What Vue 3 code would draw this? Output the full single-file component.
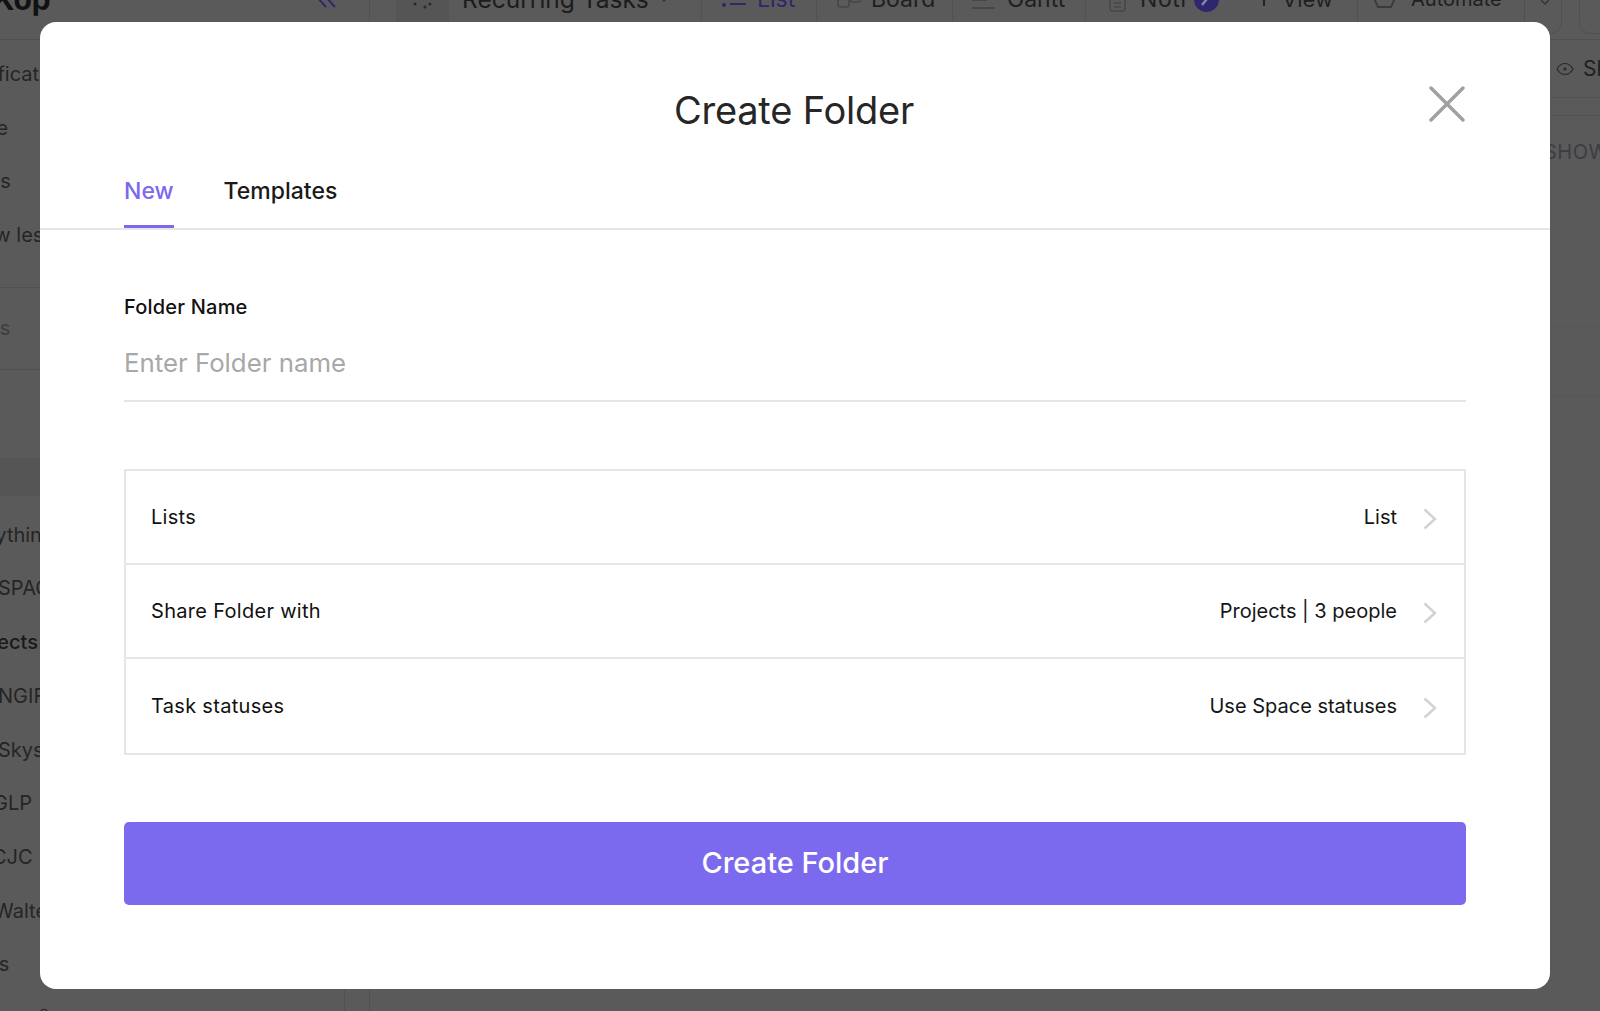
<script setup>
const upper = [
  { text: 'Notifications', shift: -41 },
  { text: 'Home', shift: -48 },
  { text: 'Goals', shift: -43 },
  { text: 'Show less', shift: -42 }
]
const lower = [
  { text: 'Everything', shift: -47, tone: 'dark' },
  { text: 'SPACES', shift: -2, tone: 'dark' },
  { text: 'Projects', shift: -40, tone: 'bold' },
  { text: 'ENGIFY', shift: -14, tone: 'dark' },
  { text: 'Skyscraper', shift: -2, tone: 'dark' },
  { text: 'GLP', shift: -7, tone: 'dark' },
  { text: 'CJC', shift: -8, tone: 'dark' },
  { text: 'Walter', shift: -6, tone: 'dark' },
  { text: 'Docs', shift: -39, tone: 'dark' }
]
const rows = [
  { label: 'Lists', value: 'List' },
  { label: 'Share Folder with', value: 'Projects | 3 people' },
  { label: 'Task statuses', value: 'Use Space statuses' }
]
</script>

<template>
  <div class="page">
    <header class="topbar">
      <div class="topbar-row">
        <span class="logo">Kop</span>
        <svg class="collapse" width="22" height="12" viewBox="0 0 22 12"><path d="M2 1l9 10M11 1l9 10" /></svg>
        <i class="vline first"></i>
        <span class="space-icon">
          <svg width="53" height="12" viewBox="0 0 53 12"><circle cx="19" cy="6" r="1.500" /><circle cx="29" cy="9" r="1.500" /><circle cx="34" cy="6" r="1.500" /></svg>
        </span>
        <span class="crumb">Recurring Tasks
          <svg width="10" height="6" viewBox="0 0 10 6"><path d="M1 1l4 4 4-4" /></svg>
        </span>
        <i class="vline"></i>
        <span class="view active v-list">
          <svg width="24" height="20" viewBox="0 0 24 20"><circle cx="2" cy="16" r="2" fill="#2f2670" /><circle cx="2" cy="8" r="2" fill="#2f2670" /><path d="M8 15h16M8 8h16" stroke="#2f2670" stroke-width="2" /></svg>
          List
        </span>
        <i class="vline"></i>
        <span class="view v-board">
          <svg width="26" height="20" viewBox="0 0 26 20" fill="none" stroke="#464646" stroke-width="1.600"><rect x="1" y="0" width="11" height="18" rx="3" /><rect x="13" y="0" width="11" height="13" rx="3" /></svg>
          Board
        </span>
        <i class="vline"></i>
        <span class="view v-gantt">
          <svg width="26" height="20" viewBox="0 0 26 20" stroke="#474747" stroke-width="2"><path d="M1 11h15M1 19h23" /></svg>
          Gantt
        </span>
        <i class="vline"></i>
        <span class="view v-not">
          <svg width="18" height="20" viewBox="0 0 18 20" fill="none" stroke="#474747" stroke-width="1.600"><rect x="1" y="0" width="15" height="22" rx="3" /><path d="M5 14h7M5 18h7" /></svg>
          Noti
        </span>
        <span class="badge">
          <svg width="25" height="25" viewBox="0 0 25 25"><path d="M8 18l9-11" /></svg>
        </span>
        <span class="view v-plus">
          <svg width="14" height="14" viewBox="0 0 14 14" stroke="#222" stroke-width="2"><path d="M7 0v14M0 7h14" /></svg>
          View
        </span>
        <span class="pill">
          <svg class="hex" width="27" height="28" viewBox="0 0 27 28" fill="none" stroke="#3a3a3a" stroke-width="1.800"><path d="M7 1h13l6 13-6 13H7L1 14z" /><circle cx="13.500" cy="14" r="5" /></svg>
          <span class="pill-label">Automate</span>
          <i class="pill-div"></i>
          <svg class="pill-caret" width="10" height="6" viewBox="0 0 10 6" fill="none" stroke="#333" stroke-width="1.400"><path d="M1 1l4 4 4-4" /></svg>
        </span>
        <span class="pill stub"></span>
      </div>
    </header>

    <div class="under">
      <aside class="side">
        <div class="side-group top">
          <div v-for="r in upper" :key="r.text" class="side-row" :style="{ marginLeft: r.shift + 'px' }">{{ r.text }}</div>
        </div>
        <div class="side-section"><span class="muted">Docs</span></div>
        <div class="side-band"></div>
        <div class="side-group">
          <div v-for="r in lower" :key="r.text" class="side-row" :class="r.tone" :style="{ marginLeft: r.shift + 'px' }">{{ r.text }}</div>
        </div>
        <svg class="side-tail" width="10" height="10" viewBox="0 0 10 10" fill="none" stroke="#2a2a2a" stroke-width="1.400"><circle cx="5" cy="5" r="3.600" /></svg>
      </aside>
      <div class="gutter"></div>
      <main class="main">
        <div class="main-tools">
          <svg class="eye" width="18" height="18" viewBox="0 0 18 18" fill="none" stroke="#2a2a2a" stroke-width="1.200"><path d="M1 9c2-3.600 4.800-5.500 8-5.500S15 5.400 17 9c-2 3.600-4.800 5.500-8 5.500S3 12.600 1 9z" /><circle cx="9" cy="9" r="1.600" fill="#2a2a2a" stroke="none" /></svg>
          <span>Show</span>
        </div>
        <div class="main-sub"></div>
        <div class="main-show">SHOW</div>
        <div class="main-row"></div>
      </main>
    </div>

    <section class="modal">
      <h1 class="title">Create Folder</h1>
      <svg class="close" width="36" height="36" viewBox="0 0 36 36" aria-label="Close">
        <path d="M2 2l32 32M34 2L2 34" />
      </svg>

      <nav class="tabs">
        <span class="tab on">New</span>
        <span class="tab">Templates</span>
      </nav>

      <div class="body">
        <label class="field-label">Folder Name</label>
        <div class="field">Enter Folder name</div>

        <div class="options">
          <div v-for="row in rows" :key="row.label" class="option">
            <span class="option-label">{{ row.label }}</span>
            <span class="option-value">{{ row.value }}</span>
            <svg class="chev" width="14" height="22" viewBox="0 0 14 22"><path d="M1.500 1.500L12 11 1.500 20.500" /></svg>
          </div>
        </div>

        <button class="submit">Create Folder</button>
      </div>
    </section>
  </div>
</template>

<style>
html, body { margin: 0; background: #5a5a5a; }
</style>

<style scoped>
.page {
  position: relative;
  width: 1600px;
  height: 1011px;
  overflow: hidden;
  background: #5a5a5a;
  font-family: Inter, "Liberation Sans", sans-serif;
  color: #1f1f1f;
}

/* dimmed app behind the dialog */
.topbar {
  height: 39px;
  border-bottom: 1px solid #505050;
  overflow: hidden;
}
.topbar-row {
  display: flex;
  align-items: center;
  width: max-content;
  height: 26px;
  margin-top: -14px;
  font-size: 23px;
  white-space: nowrap;
}
.topbar-row > * { flex: none; }
.logo { font-size: 30px; font-weight: 700; color: #111; width: 316px; margin-left: -7px; margin-right: 6px; }
.collapse { margin-top: 6px; }
.collapse path { fill: none; stroke: #2f2670; stroke-width: 2; }
.vline { width: 1px; height: 80px; background: #515151; }
.first { margin-left: 32px; }
.space-icon {
  display: flex;
  align-items: center;
  width: 53px;
  height: 86px;
  background: #555;
  margin-left: 26px;
}
.space-icon svg { margin-top: 10px; }
.space-icon circle { fill: #2b2b2b; }
.crumb {
  display: flex;
  align-items: center;
  gap: 10px;
  font-size: 24.500px;
  color: #1c1c1c;
  margin-left: 13px;
  width: 239px;
}
.crumb path { fill: none; stroke: #333; stroke-width: 1.400; }
.view { display: flex; align-items: center; color: #202020; }
.view svg { overflow: visible; flex: none; }
.active { color: #2f2670; }
.v-list { margin-left: 20px; width: 94px; gap: 11px; }
.v-board { margin-left: 20px; width: 115px; gap: 8px; }
.v-gantt { margin-left: 18px; width: 114px; gap: 10px; }
.v-not { margin-left: 23px; width: 85px; gap: 13px; letter-spacing: 0.600px; }
.badge { width: 25px; height: 25px; border-radius: 50%; background: #2f2670; }
.badge svg { display: block; }
.badge path { fill: none; stroke: #8b86b0; stroke-width: 2.400; }
.v-plus { margin-left: 38px; width: 100px; gap: 11px; font-size: 22px; }
.pill {
  display: flex;
  align-items: center;
  gap: 13px;
  width: 205px;
  height: 70px;
  padding-left: 13px;
  box-sizing: border-box;
  border: 1px solid #505050;
  border-radius: 12px;
  color: #202020;
}
.hex { margin-top: -10px; flex: none; }
.pill-label { font-size: 20px; }
.pill-div { width: 1px; height: 70px; background: #505050; margin-left: auto; }
.pill-caret { margin: 6px 11px 0 2px; flex: none; }
.stub { margin-left: 17px; width: 60px; padding: 0; }

.under { display: flex; height: 971px; }
.side {
  width: 345px;
  flex: none;
  border-right: 1px solid #515151;
  box-sizing: border-box;
  padding-top: 8px;
  overflow: hidden;
  font-size: 20px;
}
.side-row { height: 53.700px; line-height: 53.700px; color: #252525; white-space: nowrap; }
.bold { font-weight: 500; color: #1a1a1a; }
.side-section {
  margin-top: 24px;
  height: 81px;
  line-height: 81px;
  border-top: 1px solid #515151;
  border-bottom: 1px solid #515151;
}
.muted { margin-left: -38px; color: #3e3e3e; }
.side-band { height: 38px; margin: 88px 0 13px; background: #555; }
.side-tail { display: block; margin: 16px 0 0 39px; }
.gutter { width: 24px; flex: none; border-right: 1px solid #515151; }
.main { flex: 1; min-width: 0; overflow: hidden; white-space: nowrap; }
.main-tools {
  display: flex;
  align-items: center;
  gap: 9px;
  width: max-content;
  height: 57px;
  padding-left: 1186px;
  padding-right: 100px;
  border-bottom: 1px solid #525252;
  font-size: 21px;
  color: #202020;
}
.eye { flex: none; }
.main-sub { height: 17px; border-bottom: 1px solid #525252; }
.main-show { margin: 24px 0 0 1174px; font-size: 20px; color: #3c3d42; letter-spacing: 0.500px; }
.main-row { height: 68px; margin-top: 162px; border-top: 1px solid #565656; border-bottom: 1px solid #565656; }

/* dialog */
.modal {
  position: absolute;
  left: 40px;
  top: 22px;
  width: 1510px;
  height: 967px;
  box-sizing: border-box;
  background: #fff;
  border-radius: 16px;
  display: flex;
  flex-direction: column;
}
.title {
  margin: 65px 2px 0 0;
  font-size: 38px;
  line-height: 46px;
  font-weight: 400;
  letter-spacing: -0.200px;
  text-align: center;
  color: #262626;
}
.close {
  position: absolute;
  left: 1389px;
  top: 64px;
}
.close path { fill: none; stroke: #a0a0a0; stroke-width: 3.400; stroke-linecap: round; }

.tabs {
  display: flex;
  gap: 50px;
  height: 95px;
  padding: 0 84px;
  border-bottom: 2px solid #e6e6e6;
  align-items: flex-end;
}
.tab {
  font-size: 23px;
  font-weight: 500;
  line-height: 28px;
  padding-bottom: 20px;
  color: #1a1a1a;
  border-bottom: 3px solid transparent;
}
.on { color: #7b68ee; border-bottom-color: #7b68ee; }

.body {
  padding: 65px 84px 0;
  display: flex;
  flex-direction: column;
}
.field-label {
  font-size: 20px;
  line-height: 24px;
  font-weight: 500;
  letter-spacing: 0.200px;
  color: #111;
}
.field {
  margin-top: 28px;
  height: 53px;
  font-size: 25.800px;
  line-height: 32px;
  color: #a8a8a8;
  border-bottom: 2px solid #e6e6e6;
}
.options {
  margin-top: 67px;
  border: 2px solid #e6e6e6;
  box-sizing: border-box;
}
.option {
  display: flex;
  align-items: center;
  height: 92px;
  padding: 0 27px 0 25px;
  font-size: 20px;
  color: #161616;
  border-bottom: 2px solid #e6e6e6;
}
.option:last-child { border-bottom: 0; height: 94px; }
.option-label { flex: 1; font-weight: 400; letter-spacing: 0.300px; color: #111; }
.chev { margin: 4px 0 0 26px; }
.chev path { fill: none; stroke: #d2d2d2; stroke-width: 2.400; }
.submit {
  margin-top: 67px;
  height: 83px;
  padding: 0 0 2px;
  border: 0;
  border-radius: 5px;
  background: #7b69ee;
  color: #fff;
  font: 500 29px/1 Inter, "Liberation Sans", sans-serif;
}
</style>
